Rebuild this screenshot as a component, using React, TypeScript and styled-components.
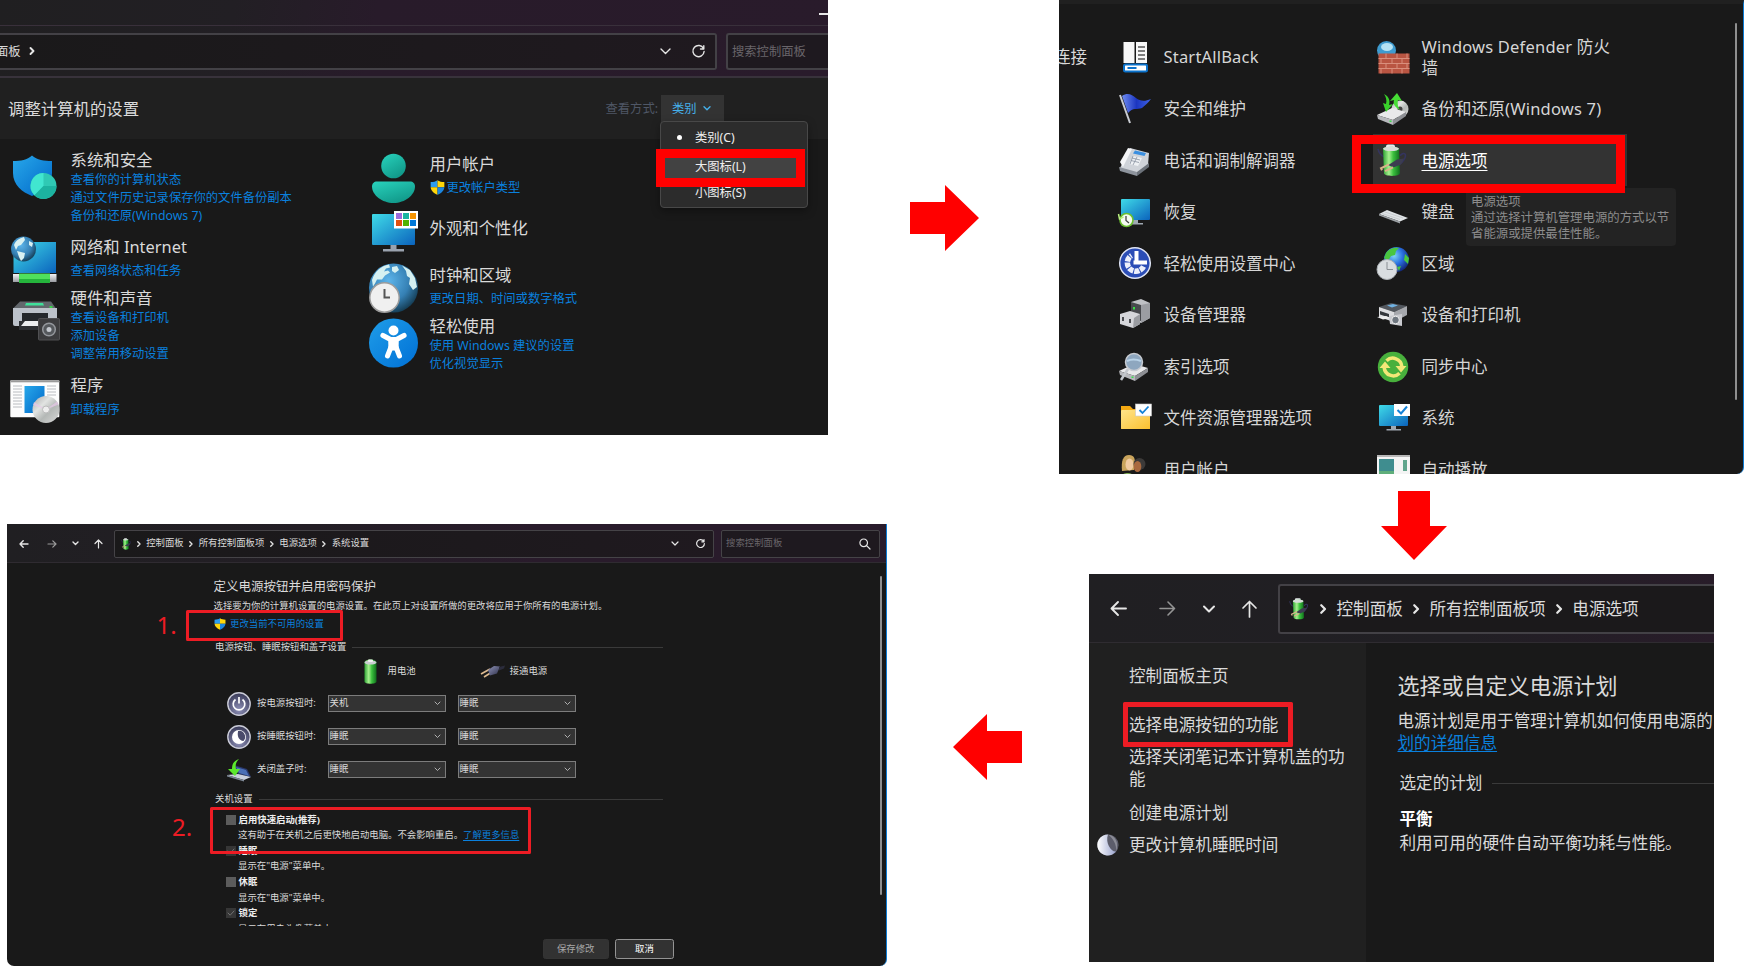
import React from 'react';
import styled, { createGlobalStyle, css } from 'styled-components';

const GlobalStyle = createGlobalStyle`
  * { box-sizing: border-box; }
  html, body { margin: 0; padding: 0; background: #fff; }
  body {
    font-family: "Noto Sans", "Noto Sans CJK SC", sans-serif;
    color: #dadada;
    overflow: hidden;
  }
  svg { display: block; flex: none; overflow: visible; }
`;

/* ---------- page ---------- */

const Page = styled.main`
  width: 1744px;
  height: 966px;
  display: flex;
  overflow: hidden;
  background: #fff;
`;

const Column = styled.div<{ $width: number }>`
  width: ${p => p.$width}px;
  flex: none;
  display: flex;
  flex-direction: column;
`;

const ArrowSlot = styled.div<{ $top: number; $left: number }>`
  padding: ${p => p.$top}px 0 0 ${p => p.$left}px;
`;

const Highlight = styled.div<{ $x: number; $y: number; $w: number; $h: number; $line: number; $color?: string }>`
  position: absolute;
  z-index: 5;
  left: ${p => p.$x}px;
  top: ${p => p.$y}px;
  width: ${p => p.$w}px;
  height: ${p => p.$h}px;
  border: ${p => p.$line}px solid ${p => p.$color || '#ed1c24'};
  border-radius: ${p => (p.$color ? 0 : 1.5)}px;
`;

const Frame = styled.section<{ $w: number; $h: number }>`
  position: relative;
  flex: none;
  width: ${p => p.$w}px;
  height: ${p => p.$h}px;
  overflow: hidden;
  background: #191919;
`;

const Text = styled.span<{ $size: number; $color?: string; $bold?: boolean; $line?: number; $underline?: boolean }>`
  display: block;
  white-space: nowrap;
  font-size: ${p => p.$size}px;
  line-height: ${p => p.$line || p.$size * 1.3}px;
  color: ${p => p.$color || '#dadada'};
  font-weight: ${p => (p.$bold ? 700 : 400)};
  ${p => p.$underline && css`text-decoration: underline; text-underline-offset: 2px;`}
`;

const LINK = '#0a80de';

/* ---------- shared drawings ---------- */

const SharedDefs = styled.svg`
  position: absolute;
  width: 0;
  height: 0;
`;

const Defs = () => (
  <SharedDefs>
    <defs>
      <linearGradient id="blue" x1="0" y1="0" x2="1" y2="1"><stop offset="0" stopColor="#28a8ea" /><stop offset="1" stopColor="#0067c8" /></linearGradient>
      <linearGradient id="access" x1="0" y1="0" x2="1" y2="1"><stop offset="0" stopColor="#1f9de8" /><stop offset="1" stopColor="#0070d6" /></linearGradient>
      <linearGradient id="screen" x1="0" y1="0" x2="1" y2="1"><stop offset="0" stopColor="#3fdbe8" /><stop offset="1" stopColor="#0b63bd" /></linearGradient>
      <linearGradient id="teal" x1="0" y1="0" x2="0.6" y2="1"><stop offset="0" stopColor="#29d3bd" /><stop offset="1" stopColor="#11998a" /></linearGradient>
      <radialGradient id="globe" cx="0.4" cy="0.35" r="0.7"><stop offset="0" stopColor="#5cb4ea" /><stop offset="0.6" stopColor="#3580b4" /><stop offset="1" stopColor="#12374c" /></radialGradient>
      <radialGradient id="globe2" cx="0.4" cy="0.35" r="0.7"><stop offset="0" stopColor="#7fd6f5" /><stop offset="0.5" stopColor="#2a6fe0" /><stop offset="1" stopColor="#10206e" /></radialGradient>
      <linearGradient id="cell" x1="0" y1="0" x2="1" y2="0"><stop offset="0" stopColor="#2fa536" /><stop offset="0.35" stopColor="#a6f08e" /><stop offset="0.6" stopColor="#3cc13e" /><stop offset="1" stopColor="#0f6d1c" /></linearGradient>
      <linearGradient id="silver" x1="0" y1="0" x2="0" y2="1"><stop offset="0" stopColor="#f4f4f6" /><stop offset="1" stopColor="#9a9ca2" /></linearGradient>
      <linearGradient id="disc" x1="0" y1="0" x2="1" y2="1"><stop offset="0" stopColor="#a8a8a8" /><stop offset="0.35" stopColor="#e2e4e2" /><stop offset="0.6" stopColor="#b4b8b6" /><stop offset="1" stopColor="#d8d8d8" /></linearGradient>
      <linearGradient id="folder" x1="0" y1="0" x2="1" y2="1"><stop offset="0" stopColor="#ffe48a" /><stop offset="1" stopColor="#fbc02f" /></linearGradient>
      <linearGradient id="flag" x1="0" y1="0" x2="1" y2="0"><stop offset="0" stopColor="#6f8cf0" /><stop offset="0.5" stopColor="#1c36c0" /><stop offset="1" stopColor="#3f63e6" /></linearGradient>
      <radialGradient id="orb" cx="0.5" cy="0.75" r="0.7"><stop offset="0" stopColor="#8d8fb6" /><stop offset="1" stopColor="#3d3e5c" /></radialGradient>
      <linearGradient id="moon" x1="0" y1="0" x2="1" y2="0"><stop offset="0" stopColor="#fff" /><stop offset="1" stopColor="#9ba5cf" /></linearGradient>
      <linearGradient id="plug" x1="0" y1="0" x2="1" y2="1"><stop offset="0" stopColor="#8f93b8" /><stop offset="1" stopColor="#2c2e48" /></linearGradient>
    </defs>
  </SharedDefs>
);

const Stroke = ({ d, w, h, color = '#e6e6e6', width = 1.4 }: { d: string; w: number; h: number; color?: string; width?: number }) => (
  <svg width={w} height={h} viewBox={`0 0 ${w} ${h}`} fill="none" stroke={color} strokeWidth={width} strokeLinecap="round" strokeLinejoin="round">
    <path d={d} />
  </svg>
);

const UacShield = ({ s }: { s: number }) => (
  <svg width={s} height={s} viewBox="0 0 16 16">
    <path d="M8 .3C6 1.7 3.600 2.200.7 2.200V7.800H8z" fill="#2a9cf0" />
    <path d="M8 .3c2 1.400 4.400 1.900 7.300 1.900V7.800H8z" fill="#ffd60a" />
    <path d="M.7 7.800C1 11.500 4 14.300 8 15.800V7.800z" fill="#ffd60a" />
    <path d="M15.300 7.800C15 11.500 12 14.300 8 15.800V7.800z" fill="#1c86e0" />
  </svg>
);

const PowerBattery = ({ s, k = 1 }: { s: number; k?: number }) => (
  <svg width={s * k} height={s} viewBox="0 0 32 34" preserveAspectRatio="none">
    <path d="M1 5c1 5 3 7 6 8M23 12c5-5 7-1 4 4-1 2-3 4-6 6" fill="none" stroke="#34345e" strokeWidth="1.600" />
    <rect x="9" y="0.500" width="9" height="4" rx="2" fill="#e8e8ee" />
    <path d="M6 5c0-3 16-3 16 0l1 25c0 4-16 4-16 0z" fill="url(#cell)" />
    <ellipse cx="14" cy="5" rx="8" ry="2.300" fill="#d7dcd9" />
    <path d="M11 22l9-6 7-1-3 6-7 3z" fill="#3c3d50" />
    <path d="M12 21l-8 4 1 2M16 24l-8 4" fill="none" stroke="#d9b48a" strokeWidth="2" />
  </svg>
);

const Monitor = ({ badge }: { badge?: 'check' | 'clock' }) => (
  <svg width="32" height="32" viewBox="0 0 32 32">
    <rect x="2" y="3" width="29" height="21" rx="1" fill="url(#screen)" />
    <path d="M14 24h5v3h5v1.500H9.500V27H14z" fill="#9fa8b2" />
    {badge === 'check' && <g><rect x="17" y="2" width="16" height="12" fill="#fff" /><path d="M20.500 8l3.500 3.500 6-7" fill="none" stroke="#1583d8" strokeWidth="2" /></g>}
    {badge === 'clock' && <g><circle cx="7.500" cy="24" r="7.300" fill="#6abf2e" /><circle cx="7.500" cy="24" r="5.700" fill="#f5fbf0" /><path d="M7 20v4.500l3 2.500" fill="none" stroke="#444" strokeWidth="1.300" /><path d="M-.5 18l1 5 4-2" fill="none" stroke="#b8ef7e" strokeWidth="1.500" /></g>}
  </svg>
);

/* ---------- window 1: categories ---------- */

const TopStrip = styled.div`
  height: 26px;
  display: flex;
  justify-content: flex-end;
  padding-top: 13px;
  border-bottom: 1px solid #39303b;
`;

const Dash = styled.div`
  width: 9px;
  height: 1.5px;
  background: #e8e8e8;
`;

const ChromeOne = styled.div`
  height: 78px;
  border-bottom: 2px solid #38323b;
  background: linear-gradient(100deg, #201f21 0%, #221f24 28%, #281b2a 45%, #291b2b 100%);
`;

const AddressRow = styled.div`
  display: flex;
  gap: 9px;
  padding-top: 7px;
`;

const AddressBox = styled.div`
  width: 717px;
  height: 37px;
  flex: none;
  display: flex;
  align-items: center;
  border: solid #434146;
  border-width: 2px 2px 2px 0;
  border-radius: 0 3px 3px 0;
  background: linear-gradient(90deg, #1a191a, #1f191f);
  padding-right: 10px;
`;

const Crumb = styled.div`
  margin-left: -4px;
  display: flex;
  align-items: center;
  gap: 9px;
  flex: 1;
`;

const SearchBox = styled.div`
  flex: 1;
  height: 37px;
  display: flex;
  align-items: center;
  border: solid #434146;
  border-width: 2px 0 2px 2px;
  border-radius: 3px 0 0 3px;
  background: #1e191f;
  padding-left: 4px;
`;

const ToolIcons = styled.div<{ $gap: number }>`
  display: flex;
  align-items: center;
  gap: ${p => p.$gap}px;
`;

const HeaderOne = styled.header`
  height: 61px;
  background: #202020;
  display: flex;
  align-items: center;
  padding: 0 104px 0 8px;
`;

const ViewBy = styled.div`
  margin-left: auto;
  display: flex;
  align-items: center;
  gap: 3px;
`;

const ViewButton = styled.div`
  width: 63px;
  height: 28px;
  display: flex;
  align-items: center;
  gap: 6.5px;
  padding-left: 11px;
  background: #333;
`;

const Menu = styled.div`
  position: absolute;
  z-index: 2;
  left: 660px;
  top: 121px;
  width: 148px;
  height: 87px;
  padding-top: 4px;
  border: 1px solid #484848;
  border-radius: 4px;
  background: #2c2c2c;
  box-shadow: 0 3px 8px rgba(0, 0, 0, .35);
`;

const MenuItem = styled.div<{ $h: number; $active?: boolean }>`
  height: ${p => p.$h}px;
  display: flex;
  align-items: center;
  margin: 0 4px;
  background: ${p => (p.$active ? '#424242' : 'transparent')};
`;

const Bullet = styled.i<{ $on?: boolean }>`
  width: 5px;
  height: 5px;
  margin: 0 13.5px 0 11.5px;
  border-radius: 50%;
  background: ${p => (p.$on ? '#fff' : 'transparent')};
`;

const CategoryGrid = styled.div`
  display: flex;
`;

const CategoryCol = styled.div<{ $left: number; $width: number; $top: number }>`
  width: ${p => p.$width}px;
  padding: ${p => p.$top}px 0 0 ${p => p.$left}px;
`;

const CategoryRow = styled.div<{ $h: number }>`
  height: ${p => p.$h}px;
  display: flex;
`;

const CategoryIcon = styled.div<{ $shift: number }>`
  width: 60.5px;
  flex: none;
  margin-top: ${p => p.$shift}px;
`;

const Links = styled.div<{ $gap: number }>`
  padding-top: ${p => p.$gap}px;
`;

const LinkLine = styled.div`
  display: flex;
  align-items: center;
  gap: 2px;
`;

type Cat = { title: string; links: string[]; h: number; gap: number; shift: number; icon: React.ReactNode; shield?: boolean };

const SecurityIcon = (
  <svg width="50" height="46" viewBox="0 0 50 46">
    <path d="M22 .5c-5 4.500-11 5.500-19 5.500v12c0 12 9 19 19 23 10-4 20-11 20-23V6c-8 0-15-1-20-5.500z" fill="url(#blue)" />
    <circle cx="33.500" cy="31" r="13" fill="#2fc9b4" />
    <path d="M33.500 31V18a13 13 0 0 0-9 22.200z" fill="#41e6d0" />
    <path d="M33.500 31H46.500a13 13 0 0 1-22 9.200z" fill="#1cb3a0" />
  </svg>
);

const NetworkIcon = (
  <svg width="50" height="48" viewBox="0 0 50 48">
    <rect x="3.500" y="6" width="42.500" height="31" fill="url(#screen)" />
    <circle cx="13.500" cy="13" r="12.500" fill="url(#globe)" />
    <path d="M4 9c2-5 6-7 10-8l1 3-4 5-3 1-2 4zM19 5l4 2-1 4-3-2zM7 15l8 2-1 5-3 3-2-4z" fill="#d9f1f2" />
    <rect x="3" y="38" width="43.500" height="8" fill="url(#silver)" />
    <rect x="9" y="37.500" width="31" height="9.500" fill="#4fe05c" />
    <rect x="9" y="43" width="31" height="4" fill="#25b53c" />
  </svg>
);

const HardwareIcon = (
  <svg width="50" height="42" viewBox="0 0 50 42">
    <path d="M10 .5h31l5 7H3z" fill="#62676c" />
    <path d="M16 2h17l1 2.500H15z" fill="#3fe09a" />
    <path d="M3 7h44v16a2 2 0 0 1-2 2H5a2 2 0 0 1-2-2z" fill="#bcc2ca" />
    <rect x="39.500" y="5" width="3" height="2" fill="#3bd04a" />
    <path d="M12 12h26v10H12z" fill="#24282c" />
    <path d="M9 20h32v9H9z" fill="#2d3034" />
    <path d="M15 20h20l2 5H11z" fill="#eceef0" />
    <rect x="28.500" y="17.500" width="21" height="21.500" rx="1" fill="#3c3c3e" stroke="#505052" />
    <circle cx="39" cy="28.500" r="6.300" fill="#55585c" stroke="#94979c" strokeWidth="1.500" />
    <circle cx="39" cy="28.500" r="2.500" fill="#c4c8ce" />
  </svg>
);

const ProgramsIcon = (
  <svg width="50" height="46" viewBox="0 0 50 46">
    <rect x=".3" y=".3" width="49" height="37" rx="1" fill="#fdfdfd" />
    <rect x=".3" y=".3" width="49" height="2" fill="#9a9a9a" />
    <path d="M3 6h9M3 9h9M3 12h9M3 15h9M3 18h9M3 21h9M3 24h9M3 27h9M37 6h9M37 9h9M37 12h9M37 15h9" stroke="#b9bcc0" />
    <rect x="14.500" y="6" width="20" height="27" fill="url(#blue)" />
    <circle cx="36" cy="29.500" r="13.500" fill="url(#disc)" />
    <path d="M36 29.500L23 25l1-3zM36 29.500l11-8 1.500 3z" fill="#e8c8ea" opacity=".7" />
    <circle cx="36" cy="29.500" r="3.500" fill="#eee" stroke="#bbb" />
  </svg>
);

const UserIcon = (
  <svg width="50" height="50" viewBox="0 0 50 50">
    <circle cx="24.500" cy="13" r="12.300" fill="url(#teal)" />
    <path d="M8 28.500h33c3 0 5 2 5 5C46 42 36 50 24.500 50S3 42 3 33.500c0-3 2-5 5-5z" fill="url(#teal)" />
  </svg>
);

const AppearanceIcon = (
  <svg width="50" height="42" viewBox="0 0 50 42">
    <rect x="3" y="3" width="43" height="31" rx="1" fill="url(#screen)" />
    <path d="M21.500 34h6v4h7.500v2.500H14V38h7.500z" fill="#9aa2ae" />
    <rect x="25" y="0" width="24" height="17.500" fill="#fff" />
    <rect x="27" y="2" width="6" height="6" fill="#9b6bdc" /><rect x="34" y="2" width="6" height="6" fill="#18b4a2" /><rect x="41" y="2" width="6" height="6" fill="#f59300" />
    <rect x="27" y="9" width="6" height="6" fill="#e2500f" /><rect x="34" y="9" width="6" height="6" fill="#51b200" /><rect x="41" y="9" width="6" height="6" fill="#0078d7" />
  </svg>
);

const ClockIcon = (
  <svg width="50" height="50" viewBox="0 0 50 50">
    <circle cx="24.500" cy="25" r="24.500" fill="url(#globe)" />
    <path d="M3 17C6 8 12 3 20 1.500l1 3-4 1-2 3 4-1 2 2-5 3-3 4-5 0-2 4-2 3zM23 4l5-1 2 4-4 3-3-2zM33 2.500l8 4.500 5 8 2 9-4 3-4-6 1-6-3-2-1-5z" fill="#d5f0f1" />
    <circle cx="15.500" cy="34.500" r="14.700" fill="#f0f0f0" stroke="#9b9b9b" strokeWidth="1.500" />
    <path d="M15.500 26v8.500H21" fill="none" stroke="#555" strokeWidth="2" />
  </svg>
);

const AccessIcon = (
  <svg width="50" height="50" viewBox="0 0 50 50">
    <circle cx="24.500" cy="25" r="24.500" fill="url(#access)" />
    <circle cx="24.500" cy="12.500" r="5" fill="#fff" />
    <path d="M14 17.500l7.500 4h6l7.500-4M21.800 22l.2 8M27.200 22l-.2 8M24.500 22v8" fill="none" stroke="#fff" strokeWidth="5.200" strokeLinecap="round" strokeLinejoin="round" />
    <path d="M22 29l-3.500 9M27 29l3.500 9" fill="none" stroke="#fff" strokeWidth="5" strokeLinecap="round" />
  </svg>
);

const leftCats: Cat[] = [
  { title: '系统和安全', links: ['查看你的计算机状态', '通过文件历史记录保存你的文件备份副本', '备份和还原(Windows 7)'], h: 87, gap: 1.2, shift: 5, icon: SecurityIcon },
  { title: '网络和 Internet', links: ['查看网络状态和任务'], h: 51, gap: 5, shift: -1, icon: NetworkIcon },
  { title: '硬件和声音', links: ['查看设备和打印机', '添加设备', '调整常用移动设置'], h: 87, gap: 1.4, shift: 13, icon: HardwareIcon },
  { title: '程序', links: ['卸载程序'], h: 60, gap: 5.6, shift: 5, icon: ProgramsIcon },
];

const rightCats: Cat[] = [
  { title: '用户帐户', links: ['更改帐户类型'], h: 64, gap: 5, shift: -1.5, icon: UserIcon, shield: true },
  { title: '外观和个性化', links: [], h: 47, gap: 0, shift: -7, icon: AppearanceIcon },
  { title: '时钟和区域', links: ['更改日期、时间或数字格式'], h: 51, gap: 5, shift: -2, icon: ClockIcon },
  { title: '轻松使用', links: ['使用 Windows 建议的设置', '优化视觉显示'], h: 60, gap: 0.6, shift: 2, icon: AccessIcon },
];

const Category = ({ c }: { c: Cat }) => (
  <CategoryRow $h={c.h}>
    <CategoryIcon $shift={c.shift}>{c.icon}</CategoryIcon>
    <div>
      <Text $size={16.4} $line={20}>{c.title}</Text>
      <Links $gap={c.gap}>
        {c.links.map(l => (
          <LinkLine key={l}>
            {c.shield && <UacShield s={15} />}
            <Text $size={12.3} $line={17.9} $color={LINK}>{l}</Text>
          </LinkLine>
        ))}
      </Links>
    </div>
  </CategoryRow>
);

const CategoryWindow = () => (
  <Frame $w={828} $h={435}>
    <ChromeOne>
      <TopStrip><Dash /></TopStrip>
      <AddressRow>
        <AddressBox>
          <Crumb>
            <Text $size={12.3}>面板</Text>
            <Stroke w={4} h={8} d="M.5 1l3 3-3 3" width={1.9} />
          </Crumb>
          <ToolIcons $gap={21.5}>
            <Stroke w={11} h={7} d="M1 1l4.500 4.500L10 1" />
            <Stroke w={13} h={13} d="M11.500 3.500A5.600 5.600 0 1 0 12.100 6.500M11.800.8v3.200H8.500" />
          </ToolIcons>
        </AddressBox>
        <SearchBox><Text $size={12.3} $color="#69656a">搜索控制面板</Text></SearchBox>
      </AddressRow>
    </ChromeOne>
    <HeaderOne>
      <Text $size={16.4}>调整计算机的设置</Text>
      <ViewBy>
        <Text $size={12.3} $color="#4f5766">查看方式:</Text>
        <ViewButton>
          <Text $size={12.3} $color="#45b0ea">类别</Text>
          <Stroke w={8} h={5} d="M1 .7l3 3 3-3" color="#45b0ea" />
        </ViewButton>
      </ViewBy>
    </HeaderOne>
    <CategoryGrid>
      <CategoryCol $left={10} $width={369} $top={11}>{leftCats.map(c => <Category key={c.title} c={c} />)}</CategoryCol>
      <CategoryCol $left={0} $width={459} $top={15}>{rightCats.map(c => <Category key={c.title} c={c} />)}</CategoryCol>
    </CategoryGrid>
    <Menu>
      <MenuItem $h={23}><Bullet $on /><Text $size={12.3} $color="#eee">类别(C)</Text></MenuItem>
      <MenuItem $h={36} $active><Bullet /><Text $size={12.3} $color="#eee">大图标(L)</Text></MenuItem>
      <MenuItem $h={15}><Bullet /><Text $size={12.3} $color="#eee">小图标(S)</Text></MenuItem>
    </Menu>
    <Highlight $x={656} $y={149} $w={149} $h={38} $line={9} $color="#ff0000" />
  </Frame>
);

/* ---------- window 2: large icons ---------- */

const FrameTwo = styled(Frame)`
  border-right: 1.5px solid #0c7bd4;
  border-top: 4px solid #202020;
  border-bottom-right-radius: 7px;
`;

const IconGrid = styled.div`
  display: grid;
  grid-template-columns: 60px 258px 250px;
  grid-auto-rows: 51.6px;
  padding-top: 27.2px;
`;

const GridItem = styled.div<{ $selected?: boolean }>`
  display: flex;
  align-items: center;
  gap: 12.5px;
  ${p => p.$selected && css`margin-left: -4px; padding-left: 4px; background: #333;`}
`;

const WrapText = styled.span<{ $selected?: boolean; $latin?: boolean }>`
  font-size: 16.5px;
  line-height: 21.3px;
  letter-spacing: ${p => (p.$latin ? 0.2 : 0)}px;
  color: ${p => (p.$selected ? '#fff' : '#d6d6d6')};
  max-width: 195px;
  ${p => p.$selected && css`text-decoration: underline; text-underline-offset: 3px;`}
`;

const Stub = styled.div`
  display: flex;
  align-items: center;
  margin-left: -5px;
`;

const ScrollThumb = styled.div<{ $x: number; $y: number; $h: number }>`
  position: absolute;
  left: ${p => p.$x}px;
  top: ${p => p.$y}px;
  width: 2px;
  height: ${p => p.$h}px;
  border-radius: 1px;
  background: #8f8f8f;
`;

const Tooltip = styled.div`
  position: absolute;
  left: 407px;
  top: 184px;
  width: 210px;
  height: 58px;
  padding: 5.5px 5px;
  border-radius: 4px;
  background: #232323;
`;

const S = ({ children }: { children: React.ReactNode }) => <svg width="32" height="32" viewBox="0 0 32 32">{children}</svg>;

const Drive = ({ y = 0 }: { y?: number }) => (
  <g transform={`translate(0 ${y})`}>
    <path d="M0 22l15-7 14 4-13 8z" fill="#e9e9eb" />
    <path d="M0 22l16 5v5L1 26z" fill="#b7b8bc" />
    <path d="M16 27l13-8v4l-13 9z" fill="#8d8f94" />
    <rect x="12.500" y="27.500" width="2" height="1.500" fill="#3ae04c" />
  </g>
);

const icons = {
  start: <S><rect x="4.500" y="1" width="11" height="21" fill="#f7f7f7" /><rect x="17" y="1" width="11" height="21" fill="#f7f7f7" /><path d="M19 6h7M19 10h7M19 14h7M19 18h7" stroke="#555" strokeWidth="1.300" /><rect x="5" y="23.500" width="23" height="7" rx="1.500" fill="#fff" stroke="#0a72cc" strokeWidth="2" /><path d="M8.500 27h9" stroke="#0a72cc" strokeWidth="2" /></S>,
  flag: <S><path d="M1 2l10 28" stroke="#c9ccd2" strokeWidth="2" /><path d="M3 3c6-4 10-1 14 2s8 4 15 1c-3 4-6 6-9 9-5 2-9-1-14 5z" fill="url(#flag)" /></S>,
  phone: <S><path d="M1 24L11 4l19 5-1 12-11 8z" fill="#cfd3d9" /><path d="M0 23l18 5v4L1 27z" fill="#8e949d" /><path d="M18 28l12-9v4l-12 9z" fill="#6c727a" /><path d="M13 5l-4-1L1 18l3 5z" fill="#f4f5f7" /><path d="M16 6.500l11 2.500-1.500 3L14 9.500z" fill="#3a8fe0" /><path d="M14 12l9 2-4 8-9-2z" fill="#eef1f4" /><path d="M13 14l8 2M12 16.500l8 2M14 12l-3 8M18 13l-4 8" stroke="#8992a0" strokeWidth=".8" /></S>,
  recovery: <Monitor badge="clock" />,
  ease: <S><circle cx="16" cy="16" r="15.300" fill="#2b4db6" stroke="#dfe4f4" strokeWidth="1.500" /><path d="M17.500 4v11.500M14.500 15.500H28" fill="none" stroke="#fff" strokeWidth="4" /><path d="M24.500 19.500a8.500 8.500 0 1 1-12-11" fill="none" stroke="#edf0fb" strokeWidth="5.500" strokeDasharray="5 1" /></S>,
  device: <S><path d="M12 3l10-3 9 4v15l-9 5-10-4z" fill="#bfc1c5" /><path d="M22 6l9-2v15l-9 5z" fill="#9b9da2" /><path d="M12 3l10 3v16l-10-3z" fill="#47494d" /><rect x="14" y="8" width="2" height="2.500" fill="#37e043" /><path d="M1 15l10-3 10 3v10l-7 4-13-4z" fill="#d5d6da" /><path d="M15 19l6-4v10l-7 4z" fill="#9a9ca1" /><path d="M4 18v4M11 20v4" stroke="#4a4c50" strokeWidth="2" /></S>,
  index: <S><Drive y={-2} /><circle cx="15" cy="11" r="8.500" fill="#8ea7bf" stroke="#c7cbd1" strokeWidth="1.500" /><path d="M8 10c4-2 9-2 14 0" stroke="#b9d3e8" strokeWidth="2" fill="none" /><path d="M9 18L2 29" stroke="#c3c6cc" strokeWidth="2.500" /></S>,
  folder: <S><path d="M2 4h9l3 3h17v20H2z" fill="#f4a912" /><rect x="2" y="8" width="29" height="19" rx="1" fill="url(#folder)" /><rect x="16.500" y="2" width="16" height="12" fill="#fff" stroke="#c8c8c8" strokeWidth=".6" /><path d="M20.500 8l3 3 6-6.500" fill="none" stroke="#1583d8" strokeWidth="1.800" /></S>,
  users: <S><path d="M0 32c0-11 4-13 9-13s8 4 8 13z" fill="#7fae54" /><path d="M3 17c-1-10 1-16 7-16s7 5 5 15z" fill="#c9a45c" /><ellipse cx="10.500" cy="10.500" rx="4" ry="6" fill="#f0cba2" /><path d="M15 32c0-9 2-12 6-12s7 3 7 12z" fill="#7b97b4" /><circle cx="20.500" cy="10" r="6" fill="#3c3a39" /><ellipse cx="18.500" cy="12.500" rx="3.800" ry="5.500" fill="#a9693f" /></S>,
  firewall: <S><circle cx="9.500" cy="9.500" r="9.500" fill="#3e9bcf" /><ellipse cx="10" cy="6" rx="6" ry="4" fill="#b5e2f3" /><rect x="1.500" y="12.500" width="31" height="20" fill="#b95542" /><path d="M1.500 17.500h31M1.500 22.500h31M1.500 27.500h31M9 12.500v5M20 12.500v5M30 12.500v5M4 17.500v5M15 17.500v5M25 17.500v5M9 22.500v5M20 22.500v5M30 22.500v5M4 27.500v5M15 27.500v5M25 27.500v5" stroke="#d98f7d" /></S>,
  backup: <S><circle cx="23" cy="16" r="8.500" fill="url(#disc)" /><circle cx="23" cy="16" r="2.500" fill="#444" /><Drive /><path d="M7 1c6 3 6 8 5 11l4-1-7 8-3-9 3 1C10 7 9 4 7 1z" fill="#39cf2b" /><path d="M23 17c-6-3-7-7-6-10l-4 1 7-8 5 8-4-1c-1 4 0 7 2 10z" fill="#46dd35" /></S>,
  power: <PowerBattery s={33} k={0.97} />,
  keyboard: <S><path d="M2 18l8-4 21 8-8 3.500z" fill="#dfe3e6" /><path d="M2 18l21 7.500v2L2 19.500z" fill="#9ca1a5" /><path d="M5 17.500l18 6M8 16l18 6" stroke="#c9cdd0" /></S>,
  region: <S><circle cx="19.500" cy="12.500" r="12.500" fill="url(#globe2)" /><path d="M9 6c3-5 9-6 13-5l-3 3-1 4-4 1-3 5-4-3zM28 7l4 4-1 6-4-4zM20 20l4-1-2 5z" fill="#49c63f" /><circle cx="10" cy="22.500" r="10" fill="#d9dde0" stroke="#a9aeb2" /><path d="M10 15v7.500h6" fill="none" stroke="#8a8f94" /></S>,
  printers: <S><path d="M2 8l12-4 16 3-13 6z" fill="#51565d" /><path d="M10 6.500l6-1.500 5 1.500-6 2z" fill="#6fb1e2" /><path d="M2 8l15 5v10L2 18z" fill="#dcdde0" /><path d="M17 13l13-6v9l-13 7z" fill="#a6a8ad" /><path d="M3 12l9 3v3.500l-9-3z" fill="#34373c" /><path d="M0 18l9-1 5 2-8 1.500z" fill="#eee" /><path d="M12 17l13-2v12l-12-2z" fill="#c9cacf" /><circle cx="18.500" cy="21" r="3.800" fill="#6f7780" stroke="#eee" /></S>,
  sync: <S><circle cx="16" cy="16" r="15.200" fill="#48b03c" /><path d="M9.500 9.800a9 9 0 0 1 15.300 5.700M22.500 22.200A9 9 0 0 1 7.200 16.500" fill="none" stroke="#f3e777" strokeWidth="3.500" /><path d="M2.500 17l5.500-6.500 5.500 6.500zM18.500 15h11L24 21.500z" fill="#f3e777" /></S>,
  system: <Monitor badge="check" />,
  autoplay: <S><rect x="0" y="1" width="33" height="30" fill="#f4f4f4" /><rect x="0" y="1" width="33" height="2" fill="#b7b7b7" /><rect x="2" y="5" width="15" height="22" fill="#3f8d8f" /><rect x="2" y="17" width="15" height="10" fill="#5fae7a" /><rect x="26" y="6" width="4" height="11" fill="#5fa58c" /></S>,
};

const gridItems: [React.ReactNode, string, React.ReactNode, string][] = [
  [icons.start, 'StartAllBack', icons.firewall, 'Windows Defender 防火墙'],
  [icons.flag, '安全和维护', icons.backup, '备份和还原(Windows 7)'],
  [icons.phone, '电话和调制解调器', icons.power, '电源选项'],
  [icons.recovery, '恢复', icons.keyboard, '键盘'],
  [icons.ease, '轻松使用设置中心', icons.region, '区域'],
  [icons.device, '设备管理器', icons.printers, '设备和打印机'],
  [icons.index, '索引选项', icons.sync, '同步中心'],
  [icons.folder, '文件资源管理器选项', icons.system, '系统'],
  [icons.users, '用户帐户', icons.autoplay, '自动播放'],
];

const LargeIconWindow = () => (
  <FrameTwo $w={685} $h={474}>
    <IconGrid>
      {gridItems.map(([a, at, b, bt], i) => (
        <React.Fragment key={at}>
          <Stub>{i === 0 && <Text $size={16.5}>连接</Text>}</Stub>
          <GridItem>{a}<WrapText $latin={i === 0}>{at}</WrapText></GridItem>
          <GridItem $selected={i === 2}>{b}<WrapText $selected={i === 2} $latin={i < 2}>{bt}</WrapText></GridItem>
        </React.Fragment>
      ))}
    </IconGrid>
    <Tooltip>
      <Text $size={12.4} $line={16} $color="#8c8c8c">电源选项</Text>
      <Text $size={12.4} $line={16} $color="#8c8c8c">通过选择计算机管理电源的方式以节</Text>
      <Text $size={12.4} $line={16} $color="#8c8c8c">省能源或提供最佳性能。</Text>
    </Tooltip>
    <ScrollThumb $x={676} $y={19} $h={377} />
    <Highlight $x={293} $y={131} $w={273} $h={58} $line={9} $color="#ff0000" />
  </FrameTwo>
);

/* ---------- window 4: power options ---------- */

const NavFour = styled.div`
  height: 69px;
  display: flex;
  align-items: center;
  padding: 1px 0 0 21px;
  border-bottom: 1px solid #2f2c31;
  background: linear-gradient(90deg, #201f22 0%, #211f24 60%, #281c29 100%);
`;

const NavArrows = styled.div<{ $gap: number; $width: number }>`
  width: ${p => p.$width}px;
  flex: none;
  display: flex;
  align-items: center;
  gap: ${p => p.$gap}px;
`;

const PathFour = styled.div`
  flex: 1;
  height: 50px;
  display: flex;
  align-items: center;
  gap: 10.2px;
  padding-left: 9px;
  border: solid #434146;
  border-width: 2px 0 2px 2px;
  border-radius: 3px 0 0 3px;
  background: #1b191b;
`;

const BodyFour = styled.div`
  display: flex;
  height: 319px;
`;

const Side = styled.nav`
  width: 277px;
  flex: none;
  padding: 21.5px 0 0 8px;
  background: #202020;
`;

const SideItem = styled.div<{ $after: number }>`
  display: flex;
  align-items: center;
  margin-bottom: ${p => p.$after}px;
`;

const SideIcon = styled.div`
  width: 32px;
  flex: none;
`;

const SideText = styled.span`
  width: 220px;
  font-size: 16.6px;
  line-height: 21.3px;
`;

const MainFour = styled.div`
  flex: 1;
  min-width: 0;
  overflow: hidden;
  padding: 28px 0 0 31.5px;
`;

const PlanBlock = styled.div`
  padding: 19px 0 0 2px;
`;

const Ruled = styled.div<{ $width?: number; $gap: number }>`
  display: flex;
  align-items: center;
  gap: ${p => p.$gap}px;
  ${p => p.$width && css`width: ${p.$width}px;`}
  &::after { content: ''; flex: 1; height: 1px; background: #3a3a3a; }
`;

const Spacer = styled.div<{ $h: number }>`
  height: ${p => p.$h}px;
`;

const Chevron = ({ s = 1 }: { s?: number }) => <Stroke w={5 * s} h={8 * s} d={`M${s} ${s}l${3 * s} ${3 * s}-${3 * s} ${3 * s}`} width={1.8 * s} />;

const PowerWindow = () => (
  <Frame $w={625} $h={388}>
    <NavFour>
      <NavArrows $gap={32} $width={168}>
        <Stroke w={17} h={15} d="M16 7.500H1.500M8 1L1.500 7.500 8 14" width={1.9} />
        <NavArrows $gap={27} $width={119}>
          <Stroke w={17} h={15} d="M1 7.500h14.500M9 1l6.500 6.500L9 14" width={1.6} color="#949494" />
          <Stroke w={12} h={8} d="M1 1.500l5 5 5-5" width={2} />
          <Stroke w={15} h={18} d="M7.500 17V1.500M1 8l6.500-6.500L14 8" width={1.7} />
        </NavArrows>
      </NavArrows>
      <PathFour>
        <PowerBattery s={22} k={0.95} />
        <Chevron s={1.25} /><Text $size={16.6}>控制面板</Text>
        <Chevron s={1.25} /><Text $size={16.6}>所有控制面板项</Text>
        <Chevron s={1.25} /><Text $size={16.6}>电源选项</Text>
      </PathFour>
    </NavFour>
    <BodyFour>
      <Side>
        <SideItem $after={28.7}><SideIcon /><SideText>控制面板主页</SideText></SideItem>
        <SideItem $after={10.7}><SideIcon /><SideText>选择电源按钮的功能</SideText></SideItem>
        <SideItem $after={12.7}><SideIcon /><SideText>选择关闭笔记本计算机盖的功能</SideText></SideItem>
        <SideItem $after={10.7}><SideIcon /><SideText>创建电源计划</SideText></SideItem>
        <SideItem $after={0}>
          <SideIcon>
            <svg width="22" height="22" viewBox="0 0 22 22"><circle cx="11" cy="11" r="10.600" fill="#5c5d6b" /><path d="M11 .5a10.500 10.500 0 1 0 8 17C14 18 8 9 11 .5z" fill="url(#moon)" /><path d="M11 .5c8 1 11 9 8 17 1-7-3-13-8-17z" fill="#8b8c96" /></svg>
          </SideIcon>
          <SideText>更改计算机睡眠时间</SideText>
        </SideItem>
      </Side>
      <MainFour>
        <Text $size={22} $line={29}>选择或自定义电源计划</Text>
        <Spacer $h={10} />
        <Text $size={16.6} $line={21.5}>电源计划是用于管理计算机如何使用电源的</Text>
        <Text $size={16.6} $line={21.5} $color={LINK} $underline>划的详细信息</Text>
        <PlanBlock>
          <Ruled $gap={10}><Text $size={16.6} $line={22}>选定的计划</Text></Ruled>
          <Spacer $h={13} />
          <Text $size={16.6} $line={24} $bold $color="#fff">平衡</Text>
          <Text $size={16.6} $line={24}>利用可用的硬件自动平衡功耗与性能。</Text>
        </PlanBlock>
      </MainFour>
    </BodyFour>
    <Highlight $x={34} $y={128} $w={170} $h={45} $line={5} />
  </Frame>
);

/* ---------- window 3: system settings ---------- */

const FrameThree = styled(Frame)`
  margin: 89px 0 0 7px;
  border-right: 1px solid #0c7bd4;
  border-radius: 0 0 7px 7px;
`;

const NavThree = styled.div`
  height: 39px;
  display: flex;
  align-items: center;
  padding: 1px 6px 0 12px;
  border-bottom: 1px solid #2f2b31;
  background: linear-gradient(90deg, #201f22 0%, #231e25 35%, #291b2b 60%);
`;

const PathThree = styled.div`
  width: 600px;
  height: 28px;
  flex: none;
  display: flex;
  align-items: center;
  gap: 5.6px;
  padding: 0 8px 0 5.5px;
  border: 1px solid #454347;
  border-radius: 2px;
  background: linear-gradient(90deg, #1a191a, #1f191f);
`;

const SearchThree = styled.div`
  width: 159px;
  height: 28px;
  margin-left: 7px;
  display: flex;
  align-items: center;
  justify-content: space-between;
  padding: 0 8px 0 4px;
  border: 1px solid #454347;
  border-radius: 2px;
  background: #1e191f;
`;

const Grow = styled.div`
  flex: 1;
`;

const SettingsBody = styled.div`
  height: 363px;
  overflow: hidden;
  padding: 15px 0 0 206.5px;
`;

const InlineRow = styled.div<{ $gap: number; $h: number; $left?: number }>`
  height: ${p => p.$h}px;
  display: flex;
  align-items: center;
  gap: ${p => p.$gap}px;
  padding-left: ${p => p.$left || 0}px;
`;

const SettingRow = styled.div`
  height: 33px;
  display: grid;
  grid-template-columns: 30px 70.5px 118px 118px;
  align-items: center;
  padding-left: 13.5px;
  & > :nth-child(4) { margin-left: 12px; }
`;

const Select = styled.div`
  width: 118px;
  height: 17px;
  display: flex;
  align-items: center;
  justify-content: space-between;
  padding: 0 4px 0 1px;
  border: 1px solid #7c7c7c;
  background: #333;
`;

const Box = styled.span<{ $dim?: boolean }>`
  width: 10px;
  height: 10px;
  background: ${p => (p.$dim ? '#363636' : '#5c5c5c')};
`;

const Options = styled.div`
  padding-left: 12.5px;
`;

const Footer = styled.footer`
  height: 40px;
  display: flex;
  gap: 6px;
  padding: 13px 0 0 535.5px;
`;

const Button = styled.div<{ $w: number; $outlined?: boolean }>`
  width: ${p => p.$w}px;
  height: 19.5px;
  display: flex;
  align-items: center;
  justify-content: center;
  border: 1px solid ${p => (p.$outlined ? '#949494' : '#343434')};
  border-radius: 2.5px;
  background: #323232;
`;

const StepNumber = styled.div<{ $x: number; $y: number }>`
  position: absolute;
  left: ${p => p.$x}px;
  top: ${p => p.$y}px;
  font-size: 24px;
  line-height: 30px;
  color: #ed1c24;
`;

const F = 9.4;

const PowerOrb = (
  <svg width="24" height="24" viewBox="0 0 24 24"><circle cx="12" cy="12" r="11.200" fill="url(#orb)" stroke="#c9cad6" strokeWidth="1.400" /><path d="M8.500 7.500a5.800 5.800 0 1 0 7 0" fill="none" stroke="#fff" strokeWidth="1.700" /><path d="M12 5v6.500" stroke="#fff" strokeWidth="1.700" /></svg>
);
const SleepOrb = (
  <svg width="24" height="24" viewBox="0 0 24 24"><circle cx="12" cy="12" r="11.200" fill="url(#orb)" stroke="#c9cad6" strokeWidth="1.400" /><circle cx="12" cy="12" r="7" fill="#fff" /><path d="M11 6.500c-1 5 1 9 5.500 9.500A6 6 0 0 0 11 6z" fill="#4a4b6b" /></svg>
);
const LidIcon = (
  <svg width="24" height="24" viewBox="0 0 24 24"><path d="M7 7l13 4 4 8-13-3z" fill="#29376b" /><path d="M9 9l10 3 3 6-10-3z" fill="#4a6fb5" /><path d="M0 17l11-1 13 3-7 3z" fill="#c9d0dc" /><path d="M0 17l17 5v1.500L0 18.500z" fill="#7c8694" /><path d="M12 1C6 3 5 7 5 11H1l7 7 5-7H9c-1-4 0-7 3-10z" fill="#5be82c" /></svg>
);
const Cell = (
  <svg width="16" height="25" viewBox="0 0 16 25"><path d="M1.500 3.500c0-4 12-4 12 0v19c0 3-12 3-12 0z" fill="url(#cell)" /><ellipse cx="7.500" cy="3.500" rx="6" ry="2" fill="#c9cdd0" /><rect x="5" y=".5" width="5" height="2.500" rx="1" fill="#f1f1f1" /></svg>
);
const PlugIcon = (
  <svg width="25" height="13" viewBox="0 0 25 13"><path d="M10 4L1 9M12 7l-8 5" stroke="#dcb98e" strokeWidth="1.700" /><path d="M8 5l6-4 6 .5-3 7-7 2z" fill="url(#plug)" /><path d="M19 2l6-1.500-1 3-5 2z" fill="#2b2c3c" /></svg>
);

const settings: [React.ReactNode, string, string][] = [
  [PowerOrb, '按电源按钮时:', '关机'],
  [SleepOrb, '按睡眠按钮时:', '睡眠'],
  [LidIcon, '关闭盖子时:', '睡眠'],
];

const Dropdown = ({ value }: { value: string }) => (
  <Select><Text $size={F}>{value}</Text><Stroke w={7} h={5} d="M1 1l2.500 2.500L6 1" width={0.9} color="#bdbdbd" /></Select>
);

const Option = ({ label, desc, locked }: { label: string; desc: React.ReactNode; locked?: boolean }) => (
  <>
    <InlineRow $gap={2.5} $h={15.6}>
      <Box $dim={locked}>{locked && <Stroke w={10} h={10} d="M2 5l2.200 2.200L8 3" width={0.9} color="#777" />}</Box>
      <Text $size={F} $bold $color="#eee">{label}</Text>
    </InlineRow>
    <InlineRow $gap={0} $h={15.6} $left={12}>{desc}</InlineRow>
  </>
);

const SettingsWindow = () => (
  <FrameThree $w={880} $h={442}>
    <NavThree>
      <NavArrows $gap={17.5} $width={95}>
        <Stroke w={10} h={8} d="M9 4H1M4.200.8L1 4l3.200 3.200" width={1.4} />
        <NavArrows $gap={15} $width={67}>
          <Stroke w={10} h={8} d="M1 4h8M5.800.8L9 4 5.800 7.200" width={1.2} color="#9a9a9a" />
          <Stroke w={7} h={5} d="M1 1l2.500 2.500L6 1" width={1.4} />
          <Stroke w={9} h={10} d="M4.500 9V1M1 4.500L4.500 1 8 4.500" width={1.2} />
        </NavArrows>
      </NavArrows>
      <PathThree>
        <PowerBattery s={12} k={0.9} />
        <Chevron s={0.75} /><Text $size={F}>控制面板</Text>
        <Chevron s={0.75} /><Text $size={F}>所有控制面板项</Text>
        <Chevron s={0.75} /><Text $size={F}>电源选项</Text>
        <Chevron s={0.75} /><Text $size={F}>系统设置</Text>
        <Grow />
        <ToolIcons $gap={17}>
          <Stroke w={8} h={5} d="M1 1l3 3 3-3" width={1.2} />
          <Stroke w={9} h={9} d="M7.800 2.500A3.900 3.900 0 1 0 8.400 4.500M8 .6v2.200H5.800" width={1.2} />
        </ToolIcons>
      </PathThree>
      <SearchThree>
        <Text $size={F} $color="#69656a">搜索控制面板</Text>
        <Stroke w={12} h={12} d="M8.500 4.800a3.800 3.800 0 1 1-7.600 0a3.800 3.800 0 1 1 7.600 0M7.600 7.600L11 11" width={1.2} />
      </SearchThree>
    </NavThree>
    <SettingsBody>
      <Text $size={12.5} $line={18}>定义电源按钮并启用密码保护</Text>
      <Spacer $h={1} />
      <Text $size={F} $line={18}>选择要为你的计算机设置的电源设置。在此页上对设置所做的更改将应用于你所有的电源计划。</Text>
      <InlineRow $gap={4.5} $h={18}><UacShield s={12} /><Text $size={F} $color={LINK}>更改当前不可用的设置</Text></InlineRow>
      <Spacer $h={6} />
      <InlineRow $gap={0} $h={16} $left={1.5}><Ruled $width={448} $gap={6}><Text $size={F}>电源按钮、睡眠按钮和盖子设置</Text></Ruled></InlineRow>
      <Spacer $h={3} />
      <InlineRow $gap={0} $h={26} $left={149}>
        <InlineRow $gap={9} $h={26}>{Cell}<Text $size={F}>用电池</Text></InlineRow>
        <InlineRow $gap={5} $h={26} $left={64}>{PlugIcon}<Text $size={F}>接通电源</Text></InlineRow>
      </InlineRow>
      <Spacer $h={3} />
      {settings.map(([icon, label, first]) => (
        <SettingRow key={label}>
          {icon}
          <Text $size={F}>{label}</Text>
          <Dropdown value={first} />
          <Dropdown value="睡眠" />
        </SettingRow>
      ))}
      <Spacer $h={5} />
      <InlineRow $gap={0} $h={16} $left={1.5}><Ruled $width={448} $gap={6}><Text $size={F}>关机设置</Text></Ruled></InlineRow>
      <Spacer $h={5} />
      <Options>
        <Option label="启用快速启动(推荐)" desc={<><Text $size={F}>这有助于在关机之后更快地启动电脑。不会影响重启。</Text><Text $size={F} $color={LINK} $underline>了解更多信息</Text></>} />
        <Option locked label="睡眠" desc={<Text $size={F}>显示在"电源"菜单中。</Text>} />
        <Option label="休眠" desc={<Text $size={F}>显示在"电源"菜单中。</Text>} />
        <Option locked label="锁定" desc={<Text $size={F}>显示在用户头像菜单中。</Text>} />
      </Options>
    </SettingsBody>
    <Footer>
      <Button $w={66.5}><Text $size={F} $color="#a8a8a8">保存修改</Text></Button>
      <Button $w={59} $outlined><Text $size={F} $color="#fff">取消</Text></Button>
    </Footer>
    <ScrollThumb $x={873} $y={52} $h={319} />
    <StepNumber $x={149.5} $y={86}>1.</StepNumber>
    <StepNumber $x={165} $y={288}>2.</StepNumber>
    <Highlight $x={179} $y={86} $w={157} $h={31} $line={3} />
    <Highlight $x={202.5} $y={283} $w={321.5} $h={47} $line={3} />
  </FrameThree>
);

/* ---------- flow arrows ---------- */

const RightArrow = () => <svg width="69" height="66" viewBox="0 0 69 66"><path d="M0 17h35V0l34 33-34 33V49H0z" fill="#f00" /></svg>;
const LeftArrow = () => <svg width="69" height="66" viewBox="0 0 69 66"><path d="M69 17H34V0L0 33l34 33V49h35z" fill="#f00" /></svg>;
const DownArrow = () => <svg width="66" height="69" viewBox="0 0 66 69"><path d="M17 0v35H0l33 34 33-34H49V0z" fill="#f00" /></svg>;

export default function App() {
  return (
    <Page>
      <GlobalStyle />
      <Defs />
      <Column $width={887}>
        <CategoryWindow />
        <SettingsWindow />
      </Column>
      <Column $width={172}>
        <ArrowSlot $top={185} $left={23}><RightArrow /></ArrowSlot>
        <ArrowSlot $top={463} $left={66}><LeftArrow /></ArrowSlot>
      </Column>
      <Column $width={685}>
        <LargeIconWindow />
        <ArrowSlot $top={17} $left={322}><DownArrow /></ArrowSlot>
        <ArrowSlot $top={14} $left={30}><PowerWindow /></ArrowSlot>
      </Column>
    </Page>
  );
}
